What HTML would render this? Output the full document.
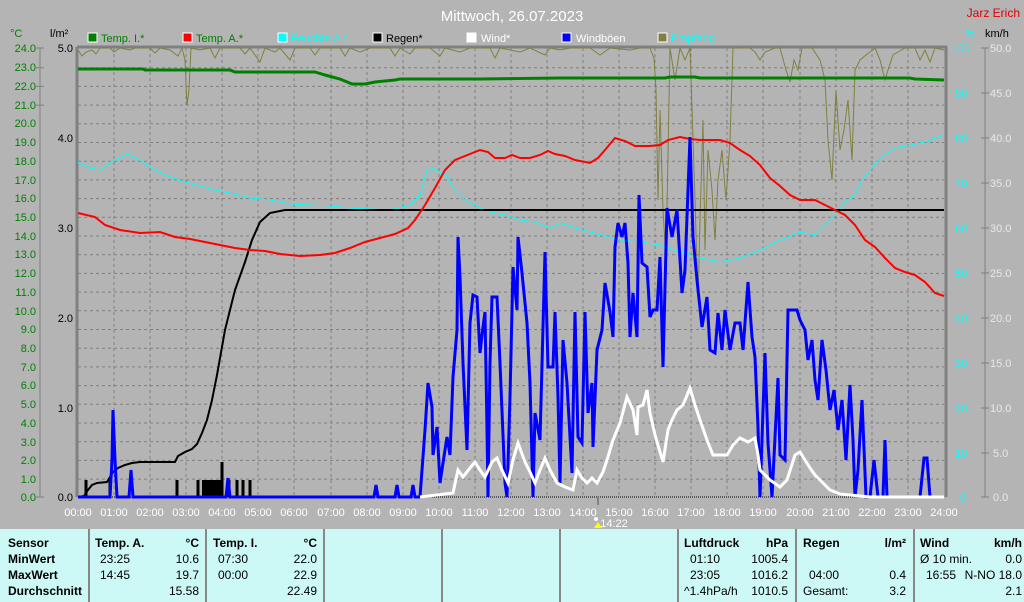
<!DOCTYPE html>
<html><head><meta charset="utf-8"><style>
body{margin:0;width:1024px;height:602px;background:#b4b4b4;font-family:"Liberation Sans",sans-serif;overflow:hidden;position:relative}
svg{position:absolute;left:0;top:0}
.bot{position:absolute;left:0;top:529px;width:1024px;height:73px;background:#ccf8f5;font-size:12px}
.col{position:absolute;top:0;height:73px;border-left:2px solid #888}
.t{position:absolute;white-space:nowrap;line-height:16px}
.b{font-weight:bold}
</style></head><body>
<svg width="1024" height="529" font-family="Liberation Sans, sans-serif">
<text x="512" y="21" fill="#fff" font-size="15" text-anchor="middle">Mittwoch, 26.07.2023</text>
<text x="1020" y="17" fill="#e00000" font-size="12" text-anchor="end">Jarz Erich</text>
<g font-size="11">
<rect x="88" y="33" width="9" height="9" fill="#008000" stroke="#fff"/><text x="101" y="42" fill="#008000">Temp. I.*</text>
<rect x="183" y="33" width="9" height="9" fill="#f00" stroke="#fff"/><text x="196" y="42" fill="#008000">Temp. A.*</text>
<rect x="278" y="33" width="9" height="9" fill="#0ff" stroke="#fff"/><text x="291" y="42" fill="#0ff">Feuchte A.*</text>
<rect x="373" y="33" width="9" height="9" fill="#000" stroke="#fff"/><text x="386" y="42" fill="#000">Regen*</text>
<rect x="467" y="33" width="9" height="9" fill="#fff" stroke="#fff"/><text x="481" y="42" fill="#fff">Wind*</text>
<rect x="562" y="33" width="9" height="9" fill="#00f" stroke="#fff"/><text x="576" y="42" fill="#fff">Windböen</text>
<rect x="658" y="33" width="9" height="9" fill="#808040" stroke="#fff"/><text x="671" y="42" fill="#0ff">Empfang</text>
<text x="10" y="37" fill="#008000">°C</text><text x="50" y="37" fill="#000">l/m²</text>
<text x="965" y="37" fill="#0ff">%</text><text x="985" y="37" fill="#000">km/h</text>
</g>
<g stroke="#808080" stroke-dasharray="3,3" stroke-width="1">
<path d="M78 67.7H944M78 86.4H944M78 105.1H944M78 123.8H944M78 142.5H944M78 161.2H944M78 179.9H944M78 198.6H944M78 217.3H944M78 236H944M78 254.7H944M78 273.4H944M78 292.1H944M78 310.8H944M78 329.5H944M78 348.2H944M78 366.9H944M78 385.6H944M78 404.3H944M78 423H944M78 441.7H944M78 460.4H944M78 479.1H944"/>
<path d="M114 48V497M150 48V497M186 48V497M222 48V497M258 48V497M294 48V497M331 48V497M367 48V497M403 48V497M439 48V497M475 48V497M511 48V497M547 48V497M583 48V497M619 48V497M655 48V497M691 48V497M727 48V497M763 48V497M800 48V497M836 48V497M872 48V497M908 48V497"/>
</g>
<path d="M78 497H944" stroke="#000" stroke-dasharray="1,1"/>
<path d="M77 47V497M77 47H946V497" stroke="#808080" stroke-width="3" fill="none"/>
<path d="M40 48V497M985 48V497" stroke="#808080"/>
<g font-size="11" fill="#008000" text-anchor="end">
<text x="36" y="52">24.0</text><text x="36" y="71">23.0</text><text x="36" y="90">22.0</text><text x="36" y="109">21.0</text><text x="36" y="127">20.0</text><text x="36" y="146">19.0</text><text x="36" y="165">18.0</text><text x="36" y="184">17.0</text><text x="36" y="202">16.0</text><text x="36" y="221">15.0</text><text x="36" y="240">14.0</text><text x="36" y="258">13.0</text><text x="36" y="277">12.0</text><text x="36" y="296">11.0</text><text x="36" y="315">10.0</text><text x="36" y="333">9.0</text><text x="36" y="352">8.0</text><text x="36" y="371">7.0</text><text x="36" y="389">6.0</text><text x="36" y="408">5.0</text><text x="36" y="427">4.0</text><text x="36" y="446">3.0</text><text x="36" y="464">2.0</text><text x="36" y="483">1.0</text><text x="36" y="501">0.0</text>
</g>
<g font-size="11" fill="#000" text-anchor="end">
<text x="73" y="52">5.0</text><text x="73" y="142">4.0</text><text x="73" y="232">3.0</text><text x="73" y="322">2.0</text><text x="73" y="412">1.0</text><text x="73" y="501">0.0</text>
</g>
<g font-size="11" fill="#0ff">
<text x="952" y="52">100</text><text x="955" y="97">90</text><text x="955" y="142">80</text><text x="955" y="187">70</text><text x="955" y="232">60</text><text x="955" y="277">50</text><text x="955" y="322">40</text><text x="955" y="367">30</text><text x="955" y="412">20</text><text x="955" y="457">10</text><text x="960" y="501">0</text>
</g>
<g font-size="11" fill="#e8e8e8">
<text x="990" y="52">50.0</text><text x="990" y="97">45.0</text><text x="990" y="142">40.0</text><text x="990" y="187">35.0</text><text x="990" y="232">30.0</text><text x="990" y="277">25.0</text><text x="990" y="322">20.0</text><text x="990" y="367">15.0</text><text x="990" y="412">10.0</text><text x="993" y="457">5.0</text><text x="993" y="501">0.0</text>
</g>
<g stroke="#808080"><path d="M36 48H44M36 67.7H44M36 86.4H44M36 105.1H44M36 497H44M981 48H989M981 93H989M981 138H989M981 183H989M981 228H989M981 273H989M981 318H989M981 363H989M981 408H989M981 453H989M981 497H989"/></g>
<g font-size="11" fill="#fff" text-anchor="middle">
<text x="78" y="516">00:00</text><text x="114" y="516">01:00</text><text x="150" y="516">02:00</text><text x="186" y="516">03:00</text><text x="222" y="516">04:00</text><text x="258" y="516">05:00</text><text x="294" y="516">06:00</text><text x="331" y="516">07:00</text><text x="367" y="516">08:00</text><text x="403" y="516">09:00</text><text x="439" y="516">10:00</text><text x="475" y="516">11:00</text><text x="511" y="516">12:00</text><text x="547" y="516">13:00</text><text x="583" y="516">14:00</text><text x="619" y="516">15:00</text><text x="655" y="516">16:00</text><text x="691" y="516">17:00</text><text x="727" y="516">18:00</text><text x="763" y="516">19:00</text><text x="800" y="516">20:00</text><text x="836" y="516">21:00</text><text x="872" y="516">22:00</text><text x="908" y="516">23:00</text><text x="944" y="516">24:00</text>
<text x="614" y="527">14:22</text>
</g>
<path d="M598 522l-4 6h8z" fill="#ff0"/><circle cx="596" cy="519" r="2" fill="#fff"/>
<path d="M598 497V505" stroke="#808080" stroke-width="2"/>
<polyline fill="none" stroke="#808040" stroke-width="1" points="78,50 82,56 86,52 92,50 96,54 100,48 110,48 114,52 120,48 130,50 135,48 150,48 155,53 160,48 170,50 178,56 182,48 185,60 187,105 189,90 191,48 200,50 210,48 215,58 220,48 240,48 245,54 250,48 260,62 265,48 275,52 280,48 290,60 295,48 310,48 315,55 320,48 340,48 345,56 350,48 360,52 370,48 390,48 395,56 400,48 410,54 415,48 430,48 440,56 445,48 460,52 470,48 490,48 495,58 500,48 520,52 530,48 545,55 550,48 560,50 570,48 590,48 600,55 610,48 630,50 640,48 650,48 654,58 656,90 658,200 660,110 663,210 666,260 670,48 675,80 680,48 685,60 690,48 695,200 698,300 700,220 703,120 705,250 708,150 712,190 715,240 718,180 722,150 726,200 730,140 733,48 750,48 755,52 760,60 765,52 775,48 780,48 786,70 790,82 794,60 798,70 802,48 812,48 820,60 825,80 828,140 832,180 836,90 840,150 844,130 848,100 852,160 855,70 860,60 866,55 875,48 880,60 885,80 888,70 893,55 898,52 905,48 915,48 920,60 925,50 930,62 935,48 944,50"/>
<polyline fill="none" stroke="#0ff" stroke-width="1" points="78,162 90,168 100,170 115,160 128,154 140,160 155,170 170,177 185,182 200,186 215,190 230,193 250,198 270,200 290,204 310,205 330,206 350,208 370,209 390,210 410,205 420,195 427,170 433,168 440,172 446,175 455,190 465,200 480,208 490,212 505,215 520,220 535,222 550,228 560,223 575,228 590,232 605,236 620,240 640,242 660,245 680,252 700,258 720,262 740,258 760,250 780,240 800,232 815,235 825,225 835,215 845,202 855,195 862,180 870,170 880,158 895,148 910,145 925,142 944,135"/>
<polyline fill="none" stroke="#000" stroke-width="2" points="78,497 84,496 88,490 92,485 97,483 107,482 110,477 113,472 118,468 125,465 132,463 140,462 175,462 178,456 185,452 192,449 197,444 202,433 207,420 212,400 217,375 225,330 235,290 245,262 252,240 260,222 270,213 285,210 300,210 944,210"/>
<g stroke="#000" stroke-width="3"><path d="M86 497V480M110 497V480M177 497V480M198 497V480M250 497V480M229 497V480M237 497V480M243 497V480"/></g>
<rect x="202" y="480" width="19" height="17" fill="#000"/>
<path d="M222 497V462" stroke="#000" stroke-width="3"/>
<polyline fill="none" stroke="#008000" stroke-width="3" points="78,69 143,69 145,70 230,70 235,72 315,72 325,75 340,79 352,84 365,84 375,82 395,80 400,79 480,79 560,78 600,78 665,78 670,77 695,77 700,78 910,78 915,79 944,80"/>
<polyline fill="none" stroke="#f00" stroke-width="2" points="78,213 95,217 105,225 120,230 140,233 160,232 175,237 190,239 205,242 220,245 235,248 250,250 265,251 280,254 300,256 320,255 335,253 350,248 365,242 380,238 395,234 408,228 415,220 425,205 435,188 445,170 455,160 465,156 480,150 488,152 495,158 505,158 512,155 520,158 530,158 540,155 548,151 555,154 565,156 575,160 590,163 598,158 605,150 615,138 625,141 635,146 650,146 660,145 668,140 680,137 690,139 700,140 720,140 730,143 740,150 750,156 760,165 770,178 780,186 790,195 800,200 815,200 825,205 835,210 845,215 855,225 865,240 875,247 885,258 895,268 905,272 915,275 925,282 935,293 944,296"/>
<polyline fill="none" stroke="#00f" stroke-width="3" points="78,497 110,497 112,460 113,410 115,460 117,497 129,497 131,470 133,497 226,497 228,478 230,497 374,497 376,485 378,497 395,497 397,485 399,497 411,497 413,485 415,497 420,497 425,430 428,383 432,407 433,455 437,427 440,483 443,463 447,437 450,455 453,377 457,330 458,237 460,277 463,363 467,450 470,323 473,295 477,297 480,353 483,327 485,312 487,430 488,497 490,363 492,297 497,297 500,363 505,483 507,497 510,397 513,267 517,310 518,237 522,273 527,323 530,383 533,497 535,413 540,440 545,252 548,367 553,367 555,312 558,397 560,483 563,340 567,383 572,473 575,312 578,437 582,443 585,312 588,413 592,383 593,447 597,350 602,330 605,283 610,312 613,337 615,247 618,223 622,237 625,223 628,263 630,337 633,293 637,337 639,195 642,263 647,267 650,317 653,310 657,310 660,257 663,367 667,208 672,237 677,210 682,293 685,270 690,137 693,237 697,280 702,327 707,297 710,350 715,353 718,313 722,350 725,310 730,350 735,323 740,323 743,350 748,282 752,337 755,357 758,427 760,497 765,353 768,443 772,497 778,378 780,455 785,460 788,310 797,310 800,320 805,330 808,360 812,340 815,380 818,400 822,340 826,370 830,410 834,390 838,430 842,400 846,460 850,385 853,440 855,497 858,470 862,400 866,497 870,497 874,460 878,497 883,497 885,440 887,497 920,497 924,458 927,458 930,497 944,497"/>
<polyline fill="none" stroke="#fff" stroke-width="3" points="420,497 453,493 458,470 463,477 470,468 475,462 480,470 485,477 492,462 497,458 502,470 508,483 513,460 518,443 525,462 530,472 535,483 540,470 545,458 550,470 557,483 565,487 573,490 577,470 582,478 587,483 592,478 597,483 603,472 607,460 613,440 620,423 627,397 633,410 637,435 638,407 643,405 647,390 650,413 655,435 663,462 668,430 672,420 677,410 683,405 690,388 695,405 700,420 707,440 713,455 720,455 727,455 733,445 740,438 748,442 755,438 758,455 760,470 770,480 780,487 787,480 795,455 800,452 805,460 810,468 815,475 822,482 830,490 840,494 850,495 870,497 944,497"/>
</svg>
<div class="bot">
<div class="col" style="left:88px"></div><div class="col" style="left:205px"></div><div class="col" style="left:323px"></div><div class="col" style="left:441px"></div><div class="col" style="left:559px"></div><div class="col" style="left:677px"></div><div class="col" style="left:795px"></div><div class="col" style="left:913px"></div>
<div class="t b" style="left:8px;top:6px">Sensor</div><div class="t b" style="left:8px;top:22px">MinWert</div><div class="t b" style="left:8px;top:38px">MaxWert</div><div class="t b" style="left:8px;top:54px">Durchschnitt</div>
<div class="t b" style="left:95px;top:6px">Temp. A.</div><div class="t b" style="right:825px;top:6px">°C</div>
<div class="t" style="left:100px;top:22px">23:25</div><div class="t" style="right:825px;top:22px">10.6</div>
<div class="t" style="left:100px;top:38px">14:45</div><div class="t" style="right:825px;top:38px">19.7</div>
<div class="t" style="right:825px;top:54px">15.58</div>
<div class="t b" style="left:213px;top:6px">Temp. I.</div><div class="t b" style="right:707px;top:6px">°C</div>
<div class="t" style="left:218px;top:22px">07:30</div><div class="t" style="right:707px;top:22px">22.0</div>
<div class="t" style="left:218px;top:38px">00:00</div><div class="t" style="right:707px;top:38px">22.9</div>
<div class="t" style="right:707px;top:54px">22.49</div>
<div class="t b" style="left:684px;top:6px">Luftdruck</div><div class="t b" style="right:236px;top:6px">hPa</div>
<div class="t" style="left:690px;top:22px">01:10</div><div class="t" style="right:236px;top:22px">1005.4</div>
<div class="t" style="left:690px;top:38px">23:05</div><div class="t" style="right:236px;top:38px">1016.2</div>
<div class="t" style="left:684px;top:54px">^1.4hPa/h</div><div class="t" style="right:236px;top:54px">1010.5</div>
<div class="t b" style="left:803px;top:6px">Regen</div><div class="t b" style="right:118px;top:6px">l/m²</div>
<div class="t" style="left:809px;top:38px">04:00</div><div class="t" style="right:118px;top:38px">0.4</div>
<div class="t" style="left:803px;top:54px">Gesamt:</div><div class="t" style="right:118px;top:54px">3.2</div>
<div class="t b" style="left:920px;top:6px">Wind</div><div class="t b" style="right:2px;top:6px">km/h</div>
<div class="t" style="left:920px;top:22px">Ø 10 min.</div><div class="t" style="right:2px;top:22px">0.0</div>
<div class="t" style="left:926px;top:38px">16:55</div><div class="t" style="right:2px;top:38px">N-NO 18.0</div>
<div class="t" style="right:2px;top:54px">2.1</div>
</div>
</body></html>
